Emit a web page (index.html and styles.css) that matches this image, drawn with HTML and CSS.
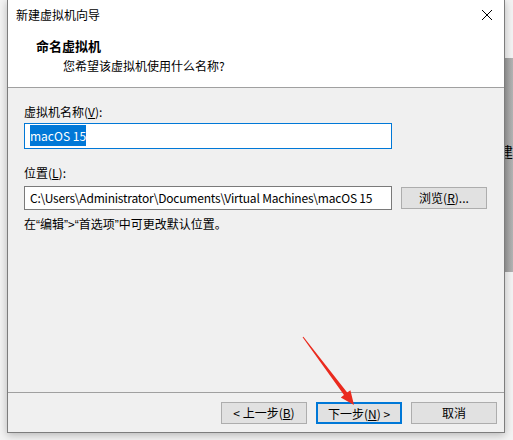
FILE: index.html
```html
<!DOCTYPE html>
<html lang="zh-CN">
<head>
    <meta charset="UTF-8" />
    <title>新建虚拟机向导</title>
    <link rel="stylesheet" href="styles.css">
</head>
<body>
<div class="screen">
    <div class="dialog">
        <div class="titlebar">
            <span class="title">新建虚拟机向导</span>
            <svg class="close" width="12" height="12" viewBox="0 0 12 12">
                <path d="M1 1 L11 11 M11 1 L1 11" stroke="#000" stroke-width="1" fill="none" />
            </svg>
        </div>

        <div class="header">
            <h1>命名虚拟机</h1>
            <p>您希望该虚拟机使用什么名称?</p>
        </div>

        <div class="content">
            <label class="field-label">虚拟机名称(<u>V</u>):</label>
            <div class="input focused"><span class="selected">macOS 15</span></div>

            <label class="field-label second">位置(<u>L</u>):</label>
            <div class="row">
                <div class="input path">C:\Users\Administrator\Documents\Virtual Machines\macOS 15</div>
                <button class="btn browse">浏览(<u>R</u>)...</button>
            </div>
            <p class="hint">在<span class="q">“</span>编辑<span class="q">”</span>&gt;<span class="q">“</span>首选项<span class="q">”</span>中可更改默认位置。</p>
        </div>

        <div class="footer">
            <button class="btn">&lt; 上一步(<u>B</u>)</button>
            <button class="btn default">下一步(<u>N</u>) &gt;</button>
            <button class="btn">取消</button>
        </div>
    </div>

    <div class="backdrop">
        <div class="panel">建</div>
    </div>

    <!-- red pointer onto the next button -->
    <svg class="pointer" width="513" height="440" viewBox="0 0 513 440">
        <polygon points="302.6,337.3 344.0,395.0 340.8,397.4 354,405 350.4,390.2 347.2,392.6 303.4,336.7" fill="#ea2a1e" />
    </svg>
</div>
</body>
</html>
```

FILE: styles.css
```css
* {
  box-sizing: border-box;
}
body {
  margin: 0;
  background: #f3f3f3;
  font-family: "Noto Sans CJK SC", "Microsoft YaHei", sans-serif;
  font-size: 12px;
  color: #000;
}
.screen {
  position: relative;
  width: 513px;
  height: 440px;
  display: flex;
  overflow: hidden;
}
.dialog {
  position: relative;
  z-index: 2;
  margin-left: 7px;
  width: 499px;
  height: 433px;
  border: 1px solid #7d7d7d;
  border-top: none;
  background: #f0f0f0;
  display: flex;
  flex-direction: column;
  box-shadow: 0 2px 8px rgba(0,0,0,0.25);
}
.titlebar {
  height: 30px;
  background: #fff;
  display: flex;
  align-items: center;
  justify-content: space-between;
  padding: 0 11px 0 8px;
}
.title {
  line-height: 1;
}
.close {
  display: block;
}
.header {
  height: 58px;
  background: #fff;
  border-bottom: 1px solid #a0a0a0;
  padding: 7px 0 0 28px;
}
.header h1 {
  margin: 0;
  font-size: 13px;
  font-weight: bold;
  line-height: 18px;
}
.header p {
  margin: 2px 0 0 27px;
  line-height: 18px;
}
.content {
  flex: 1;
  padding: 15px 0 0 16px;
}
.field-label {
  display: block;
  line-height: 18px;
}
.field-label.second {
  margin-top: 15px;
}
.input {
  width: 368px;
  height: 24px;
  margin-top: 8px;
  border: 1px solid #7a7a7a;
  background: #fff;
  padding: 0 5px;
  line-height: 22px;
  white-space: nowrap;
  overflow: hidden;
}
.input.focused {
  height: 26px;
  margin-top: 2px;
  border-color: #0078d7;
  line-height: 24px;
}
.input.path {
  letter-spacing: -0.2px;
}
.selected {
  background: #0078d7;
  color: #fff;
  padding: 2px 0;
}
.row {
  display: flex;
  align-items: flex-end;
  gap: 9px;
}
.row .input {
  margin-top: 4px;
}
.btn {
  font-family: inherit;
  font-size: 12px;
  color: #000;
  width: 86px;
  height: 22px;
  padding: 0;
  background: #e1e1e1;
  border: 1px solid #adadad;
  line-height: 20px;
}
.browse {
  margin-bottom: 1px;
}
.btn.default {
  border: 2px solid #0078d7;
}
.hint {
  margin: 5px 0 0;
  line-height: 18px;
}
.hint .q {
  font-family: "Liberation Sans", sans-serif;
}
.footer {
  height: 40px;
  border-top: 1px solid #a0a0a0;
  display: flex;
  justify-content: flex-end;
  gap: 9px;
  padding: 9px 7px 0 0;
}
.backdrop {
  flex: 1;
  position: relative;
  z-index: 1;
}
.panel {
  margin-top: 58px;
  height: 214px;
  background: linear-gradient(90deg, #9c9c9c, #b4b4b4);
  padding-top: 83px;
  text-indent: -6px;
  white-space: nowrap;
  overflow: hidden;
  font-size: 14px;
}
.pointer {
  position: absolute;
  left: 0;
  top: 0;
  z-index: 3;
}
```
